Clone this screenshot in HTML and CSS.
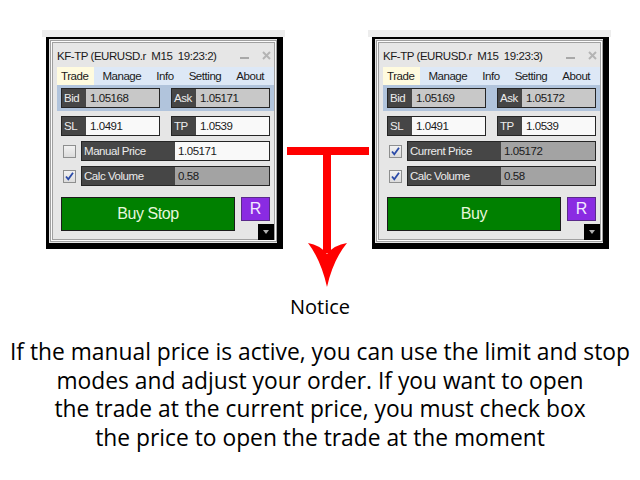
FILE: index.html
```html
<!DOCTYPE html>
<html>
<head>
<meta charset="utf-8">
<title>KF-TP Notice</title>
<link rel="stylesheet" href="styles.css">
</head>
<body>
<div class="top">
  <div class="win">
    <div class="strip"></div>
    <div class="frame">
      <div class="f1"><div class="f2">
        <div class="title">
          <span class="ttext">KF-TP (EURUSD.r  M15  19:23:2)</span>
          <svg class="tbtns" width="34" height="10" viewBox="0 0 34 10"><rect x="2" y="6" width="9" height="2" fill="#a8a8a8"/><path d="M25 1 L32 8 M32 1 L25 8" stroke="#b4b4b4" stroke-width="2"/></svg>
        </div>
        <div class="menu"><span class="mi active">Trade</span><span class="mi">Manage</span><span class="mi">Info</span><span class="mi">Setting</span><span class="mi">About</span></div>
        <div class="quote">
          <div class="pair"><span class="lab">Bid</span><span class="val gray">1.05168</span></div>
          <div class="pair"><span class="lab">Ask</span><span class="val gray">1.05171</span></div>
        </div>
        <div class="row">
          <div class="pair"><span class="lab">SL</span><span class="val white">1.0491</span></div>
          <div class="pair"><span class="lab">TP</span><span class="val white">1.0539</span></div>
        </div>
        <div class="row">
          <span class="cb"></span>
          <div class="pair wide"><span class="lab">Manual Price</span><span class="val white">1.05171</span></div>
        </div>
        <div class="row">
          <span class="cb"><svg width="11" height="11" viewBox="0 0 11 11"><path d="M2 5.5 L4.3 8.3 L9 1.8" fill="none" stroke="#2a4aa8" stroke-width="1.8"/></svg></span>
          <div class="pair wide"><span class="lab">Calc Volume</span><span class="val dim">0.58</span></div>
        </div>
        <div class="btns">
          <div class="buy">Buy Stop</div>
          <div class="rbtn">R</div>
        </div>
      </div></div>
      <div class="grip"><span class="tri"></span></div>
    </div>
  </div>

  <svg class="conn" width="89" height="258" viewBox="0 0 89 258">
    <rect x="4" y="117" width="82" height="8" fill="#ff0000"/>
    <rect x="40" y="117" width="8" height="106" fill="#ff0000"/>
    <path d="M25 213 Q37 215 44 224 Q51 215 64 213 Q50 230 44 257 Q38 230 25 213 Z" fill="#ff0000"/>
  </svg>

  <div class="win">
    <div class="strip"></div>
    <div class="frame">
      <div class="f1"><div class="f2">
        <div class="title">
          <span class="ttext">KF-TP (EURUSD.r  M15  19:23:3)</span>
          <svg class="tbtns" width="34" height="10" viewBox="0 0 34 10"><rect x="2" y="6" width="9" height="2" fill="#a8a8a8"/><path d="M25 1 L32 8 M32 1 L25 8" stroke="#b4b4b4" stroke-width="2"/></svg>
        </div>
        <div class="menu"><span class="mi active">Trade</span><span class="mi">Manage</span><span class="mi">Info</span><span class="mi">Setting</span><span class="mi">About</span></div>
        <div class="quote">
          <div class="pair"><span class="lab">Bid</span><span class="val gray">1.05169</span></div>
          <div class="pair"><span class="lab">Ask</span><span class="val gray">1.05172</span></div>
        </div>
        <div class="row">
          <div class="pair"><span class="lab">SL</span><span class="val white">1.0491</span></div>
          <div class="pair"><span class="lab">TP</span><span class="val white">1.0539</span></div>
        </div>
        <div class="row">
          <span class="cb"><svg width="11" height="11" viewBox="0 0 11 11"><path d="M2 5.5 L4.3 8.3 L9 1.8" fill="none" stroke="#2a4aa8" stroke-width="1.8"/></svg></span>
          <div class="pair wide"><span class="lab">Current Price</span><span class="val dim">1.05172</span></div>
        </div>
        <div class="row">
          <span class="cb"><svg width="11" height="11" viewBox="0 0 11 11"><path d="M2 5.5 L4.3 8.3 L9 1.8" fill="none" stroke="#2a4aa8" stroke-width="1.8"/></svg></span>
          <div class="pair wide"><span class="lab">Calc Volume</span><span class="val dim">0.58</span></div>
        </div>
        <div class="btns">
          <div class="buy">Buy</div>
          <div class="rbtn">R</div>
        </div>
      </div></div>
      <div class="grip"><span class="tri"></span></div>
    </div>
  </div>
</div>

<div class="notice">Notice</div>
<p class="para">If the manual price is active, you can use the limit and stop<br>modes and adjust your order. If you want to open<br>the trade at the current price, you must check box<br>the price to open the trade at the moment</p>
</body>
</html>
```

FILE: styles.css
```css
* { box-sizing: border-box; }
html, body { margin: 0; padding: 0; background: #ffffff; }
body { font-family: "Open Sans", "Noto Sans", sans-serif; color: #000; }

.top {
  display: flex;
  align-items: flex-start;
  padding: 30px 0 0 46px;
}

.win { width: 237px; font-family: "Liberation Sans", Arial, sans-serif; font-size: 11.5px; letter-spacing: -0.45px; color: #1a1a1a; }
.strip { height: 7px; margin: 0 -2px 0 -4px; background: #ededed; }

.frame {
  position: relative;
  background: #e6e6e6;
  border-top: 2px solid #000;
  border-left: 3px solid #000;
  border-right: 6px solid #000;
  border-bottom: 6px solid #000;
  padding: 1px 0 1px 1px;
}
.f1 { border: 1px solid #a0a0a0; padding: 1px; background: #fbfbfb; }
.f2 { border: 1px solid #a0a0a0; background: #e6e6e6; padding: 0 0 8px 4px; }

.title { height: 24px; display: flex; align-items: center; justify-content: space-between; padding-top: 1px; }
.ttext { white-space: pre; }
.tbtns { margin-right: 2px; }

.menu { height: 18px; display: flex; align-items: stretch; background: #dde8f6; }
.mi { display: flex; align-items: center; padding: 0 4px; margin-right: 7px; }
.mi.active { background: #fffbdf; padding-right: 6px; margin-right: 4px; }

.quote { height: 26px; display: flex; align-items: center; gap: 11px; padding: 0 4px; background: #b1c4dc; }
.row { display: flex; align-items: center; gap: 11px; margin: 5px 4px 0; height: 20px; }
.row .cb + .pair { margin-left: -6px; }

.pair { display: flex; width: 99px; height: 20px; border: 1px solid #252525; }
.pair.wide { width: 189px; }
.lab { width: 24px; background: #464646; color: #ececec; display: flex; align-items: center; padding-left: 2px; white-space: nowrap; }
.pair.wide .lab { width: 93px; padding-left: 2px; }
.val { flex: 1; display: flex; align-items: center; padding-left: 4px; color: #1a1a1a; }
.pair.wide .val { padding-left: 3px; }
.val.gray { background: #c8c8c8; }
.val.white { background: #f9f9f9; }
.val.dim { background: #a3a3a3; }

.cb {
  width: 13px; height: 13px; margin-left: 2px;
  border: 1px solid #8e8f8f;
  background: linear-gradient(#f2f2f2, #dcdcdc);
  display: flex; align-items: center; justify-content: center;
}

.btns { display: flex; align-items: flex-start; gap: 6px; margin: 11px 4px 0; }
.buy {
  width: 174px; height: 34px;
  background: #008000; border: 1px solid #1c1c1c;
  color: #e6f7dc; font-size: 16px; letter-spacing: -0.4px;
  display: flex; align-items: center; justify-content: center;
}
.rbtn {
  width: 29px; height: 24px;
  background: #8a2be2; border: 1px solid #5a2a8a;
  color: #f2eaff; font-size: 16px; letter-spacing: 0;
  display: flex; align-items: center; justify-content: center;
}

.grip {
  position: absolute; right: 3px; bottom: 3px;
  width: 16px; height: 16px; background: #000;
  display: flex; align-items: center; justify-content: center;
}
.tri { width: 0; height: 0; border-left: 3px solid transparent; border-right: 3px solid transparent; border-top: 4px solid #b0b0b0; }

.conn { display: block; flex: none; }

.notice { margin-top: 5px; text-align: center; font-size: 20px; line-height: 28px; }
.para { margin: 17px 0 0; text-align: center; font-size: 22.8px; line-height: 28.5px; }
```
